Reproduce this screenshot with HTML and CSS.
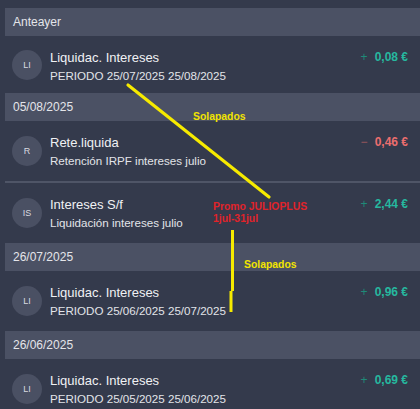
FILE: index.html
```html
<!DOCTYPE html>
<html lang="es">
<head>
<meta charset="utf-8">
<title>Movimientos</title>
<link rel="stylesheet" href="styles.css">
</head>
<body>
<div class="page">
  <div class="list">
    <div class="day">Anteayer</div>
    <div class="item first">
      <div class="avatar">LI</div>
      <div class="info">
        <div class="top"><span class="title">Liquidac. Intereses</span><span class="amount pos"><span class="sign">+</span>0,08 €</span></div>
        <div class="sub">PERIODO 25/07/2025 25/08/2025</div>
      </div>
    </div>
    <div class="day">05/08/2025</div>
    <div class="item">
      <div class="avatar">R</div>
      <div class="info">
        <div class="top"><span class="title">Rete.liquida</span><span class="amount neg"><span class="sign">−</span>0,46 €</span></div>
        <div class="sub">Retención IRPF intereses julio</div>
      </div>
    </div>
    <div class="sep"></div>
    <div class="item">
      <div class="avatar">IS</div>
      <div class="info">
        <div class="top"><span class="title">Intereses S/f</span><span class="amount pos"><span class="sign">+</span>2,44 €</span></div>
        <div class="sub">Liquidación intereses julio</div>
      </div>
    </div>
    <div class="day">26/07/2025</div>
    <div class="item">
      <div class="avatar">LI</div>
      <div class="info">
        <div class="top"><span class="title">Liquidac. Intereses</span><span class="amount pos"><span class="sign">+</span>0,96 €</span></div>
        <div class="sub">PERIODO 25/06/2025 25/07/2025</div>
      </div>
    </div>
    <div class="day">26/06/2025</div>
    <div class="item">
      <div class="avatar">LI</div>
      <div class="info">
        <div class="top"><span class="title">Liquidac. Intereses</span><span class="amount pos"><span class="sign">+</span>0,69 €</span></div>
        <div class="sub">PERIODO 25/05/2025 25/06/2025</div>
      </div>
    </div>
  </div>

  <svg class="marks" width="420" height="409" viewBox="0 0 420 409" aria-hidden="true">
    <line x1="128" y1="85" x2="269" y2="197" stroke="#f6ea00" stroke-width="3.2" stroke-linecap="round"/>
    <path d="M232.5 230 V291 M231 291 V312" stroke="#f6ea00" stroke-width="3" fill="none"/>
  </svg>
  <div class="note solap1">Solapados</div>
  <div class="note promo">Promo JULIOPLUS<br>1jul-31jul</div>
  <div class="note solap2">Solapados</div>
</div>
</body>
</html>
```
FILE: styles.css
```css
html, body {
  margin: 0;
  padding: 0;
  background: #343a4c;
}
body {
  font-family: "Liberation Sans", Arial, sans-serif;
  color: #e6e7eb;
  overflow: hidden;
}
.page {
  position: relative;
  width: 420px;
  height: 409px;
  overflow: hidden;
}
.list {
  padding-top: 8px;
}
.day {
  margin-left: 5px;
  height: 28px;
  background: #4b5164;
  display: flex;
  align-items: center;
  padding-left: 8px;
  font-size: 12px;
  color: #e4e5ea;
}
.item {
  height: 60px;
  display: flex;
  align-items: center;
  padding: 0 12px 0 12px;
}
.item.first {
  height: 57px;
}
.item.first .info {
  padding-top: 3px;
}
.avatar {
  flex: none;
  width: 30px;
  height: 30px;
  border-radius: 50%;
  background: #4a5063;
  color: #d8dae0;
  font-size: 9px;
  display: flex;
  align-items: center;
  justify-content: center;
}
.info {
  flex: 1;
  margin-left: 8px;
  min-width: 0;
}
.top {
  display: flex;
  justify-content: space-between;
  align-items: center;
  line-height: 17px;
}
.title {
  font-size: 13px;
  color: #f0f1f4;
}
.sub {
  font-size: 11.6px;
  line-height: 17px;
  margin-top: 1px;
  color: #e2e4e9;
  white-space: nowrap;
}
.amount {
  font-size: 12px;
  font-weight: bold;
}
.amount .sign {
  font-weight: normal;
  margin-right: 7px;
}
.pos { color: #26b89f; }
.pos .sign { color: #1f8a78; }
.neg { color: #ec6e6e; }
.neg .sign { color: #a0585d; }
.sep {
  margin-left: 5px;
  height: 2px;
  background: #4f5567;
}
.marks {
  position: absolute;
  left: 0;
  top: 0;
  pointer-events: none;
}
.note {
  position: absolute;
  font-family: "Liberation Sans", Arial, sans-serif;
  font-weight: bold;
  font-size: 10.4px;
  line-height: 12px;
}
.solap1 {
  left: 193px;
  top: 111px;
  color: #f2e400;
}
.solap2 {
  left: 244px;
  top: 259px;
  color: #f2e400;
}
.promo {
  left: 213px;
  top: 201px;
  color: #e0232a;
}
```
